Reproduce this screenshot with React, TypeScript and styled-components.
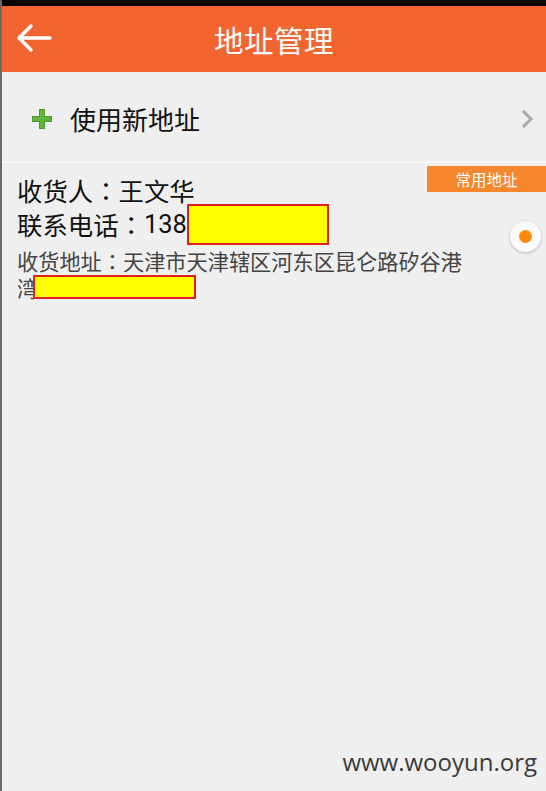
import React from "react";
import styled, { createGlobalStyle } from "styled-components";

const Global = createGlobalStyle`
  html, body { margin: 0; padding: 0; background: #efefef; }
  body { font-family: Roboto, "Noto Sans CJK SC", "Noto Sans", sans-serif; }
  * { box-sizing: border-box; }
`;

const Screen = styled.div`
  width: 546px;
  height: 791px;
  background: #efefef;
  display: flex;
  flex-direction: column;
  border-left: 2px solid #6a6a6a;
  position: relative;
  overflow: hidden;
`;

const StatusBar = styled.div`
  height: 6px;
  background: #050505;
  margin-left: -2px;
`;

const Header = styled.div`
  height: 66px;
  background: #f26530;
  margin-left: -2px;
  display: flex;
  align-items: center;
  justify-content: center;
  position: relative;
`;

const Back = styled.div`
  position: absolute;
  left: 16px;
  top: 17px;
  width: 36px;
  height: 30px;
`;

const Title = styled.div`
  color: #fff;
  font-size: 29.5px;
  letter-spacing: 0.5px;
  margin-left: 2px;
`;

const NewRow = styled.div`
  height: 91px;
  display: flex;
  align-items: center;
  padding: 5px 12px 0 28px;
  border-bottom: 2px solid #f8f8f8;
`;

const NewText = styled.div`
  font-size: 26px;
  color: #111;
  margin-left: 16px;
  flex: 1;
  padding-bottom: 2px;
`;

const Card = styled.div`
  position: relative;
  padding: 12px 0 0 15px;
  display: flex;
  flex-direction: column;
`;

const Badge = styled.div`
  position: absolute;
  right: 0;
  top: 3px;
  width: 119px;
  height: 26px;
  background: #f7872c;
  color: #fff;
  font-size: 15.5px;
  display: flex;
  align-items: center;
  justify-content: center;
`;

const Line = styled.div<{ $size: number; $color: string; $h: number }>`
  font-size: ${(p) => p.$size}px;
  color: ${(p) => p.$color};
  height: ${(p) => p.$h}px;
  display: flex;
  align-items: center;
  white-space: nowrap;
`;

const Colon = styled.span`
  font-family: "Noto Sans CJK TC", sans-serif;
`;

const Mask = styled.span<{ $w: number; $h: number; $shift?: number }>`
  display: inline-block;
  flex: none;
  width: ${(p) => p.$w}px;
  height: ${(p) => p.$h}px;
  margin-left: ${(p) => p.$shift ?? 0}px;
  background: #ffff00;
  border: 2px solid #e02020;
`;

const Radio = styled.div`
  position: absolute;
  right: 5px;
  top: 58px;
  width: 31px;
  height: 31px;
  border-radius: 50%;
  background: #fafafa;
  box-shadow: 0 1px 3px rgba(0, 0, 0, 0.25);
  display: flex;
  align-items: center;
  justify-content: center;
`;

const Dot = styled.div`
  width: 13px;
  height: 13px;
  border-radius: 50%;
  background: #f98a0e;
`;

const Watermark = styled.div`
  position: absolute;
  right: 9px;
  bottom: 13px;
  font-family: "Open Sans", "DejaVu Sans", sans-serif;
  font-size: 24px;
  color: #3a3a3a;
`;

export default function App() {
  return (
    <>
      <Global />
      <Screen>
        <StatusBar />
        <Header>
          <Back>
            <svg width="36" height="30" viewBox="0 0 36 30">
              <path d="M34 15 H4 M15 3 L3 15 L15 27" fill="none" stroke="#fff" strokeWidth="3.5" strokeLinecap="round" strokeLinejoin="round" />
            </svg>
          </Back>
          <Title>地址管理</Title>
        </Header>
        <NewRow>
          <svg width="24" height="24" viewBox="0 0 24 24">
            <path d="M12 2 V22 M2 12 H22" stroke="#4a9b2a" strokeWidth="6" />
            <path d="M12 3 V21 M3 12 H21" stroke="#62b53a" strokeWidth="4" />
          </svg>
          <NewText>使用新地址</NewText>
          <svg width="14" height="20" viewBox="0 0 14 20">
            <path d="M3 2 L11 10 L3 18" fill="none" stroke="#a9a9a9" strokeWidth="3" />
          </svg>
        </NewRow>
        <Card>
          <Badge>常用地址</Badge>
          <Radio>
            <Dot />
          </Radio>
          <Line $size={25.4} $color="#111" $h={30}>收货人<Colon>：</Colon>王文华</Line>
          <Line $size={25.4} $color="#111" $h={38}>
            联系电话<Colon>：</Colon>138
            <Mask $w={142} $h={41} />
          </Line>
          <Line $size={21.2} $color="#444" $h={34}>收货地址<Colon>：</Colon>天津市天津辖区河东区昆仑路矽谷港</Line>
          <Line $size={21.2} $color="#444" $h={20}>
            湾<Mask $w={163} $h={24} $shift={-5} />
          </Line>
        </Card>
        <Watermark>www.wooyun.org</Watermark>
      </Screen>
    </>
  );
}
